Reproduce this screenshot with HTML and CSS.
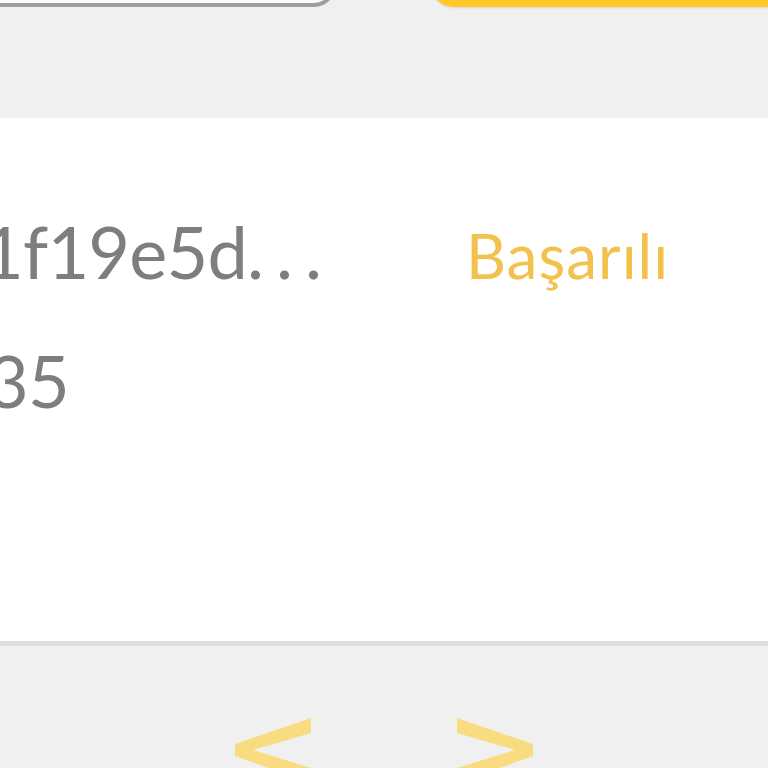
FILE: index.html
```html
<!DOCTYPE html>
<html lang="tr">

<head>
	<meta charset="UTF-8" />
	<meta name="viewport" content="width=device-width, initial-scale=1.0" />
	<title>İşlem Detayı</title>
	<link rel="stylesheet" href="styles.css">
</head>

<body>
	<div class="actions">
		<div class="btn btn-outline"></div>
		<div class="btn btn-primary"></div>
	</div>

	<div class="card">
		<div class="row">
			<div class="value value-hash">1f19e5d<span class="dots">...</span></div>
			<div class="status">Başarılı</div>
		</div>
		<div class="row">
			<div class="value value-time">35</div>
		</div>
	</div>

	<div class="pager">
		<svg class="chevron" width="80" height="70" viewBox="0 0 80 70">
			<polygon points="78,2 78,17 20,34 78,52 78,67 2,40 2,28" />
		</svg>
		<svg class="chevron" width="80" height="70" viewBox="0 0 80 70">
			<polygon points="2,2 2,17 60,34 2,52 2,67 78,40 78,28" />
		</svg>
	</div>
</body>

</html>
```

FILE: styles.css
```css
body {
	margin: 0;
	overflow: hidden;
	background-color: #f0f0f0;
	font-family: Lato, "Noto Sans", sans-serif;
}

.actions {
	display: flex;
	gap: 94px;
	height: 60px;
	margin: -53px -40px 0 -40px;
}

.btn {
	box-sizing: border-box;
	height: 60px;
}

.btn-outline {
	width: 376px;
	background-color: #fbfbfb;
	border: 4px solid #9e9e9e;
	border-radius: 22px;
}

.btn-primary {
	flex: 1;
	background-color: #ffc928;
	border-radius: 24px;
	box-shadow: 0 1px 2px rgb(0 0 0 / 10%);
}

.card {
	margin-top: 111px;
	height: 528px;
	box-sizing: border-box;
	padding-top: 71px;
	background-color: #fff;
	border-bottom: 5px solid #dedede;
}

.row {
	display: flex;
	align-items: baseline;
	line-height: 125px;
}

.value {
	width: 484px;
	flex-shrink: 0;
	font-size: 72px;
	color: #7e7e7e;
	letter-spacing: -0.8px;
	white-space: nowrap;
}

.value-hash {
	margin-left: -18px;
}

.value-time {
	margin-left: -13px;
}

.dots {
	letter-spacing: 12px;
}

.status {
	font-size: 62px;
	letter-spacing: 1px;
	color: #f2c24c;
}

.pager {
	display: flex;
	justify-content: center;
	gap: 142px;
	padding-top: 70px;
}

.chevron {
	fill: #f9db80;
}
```
